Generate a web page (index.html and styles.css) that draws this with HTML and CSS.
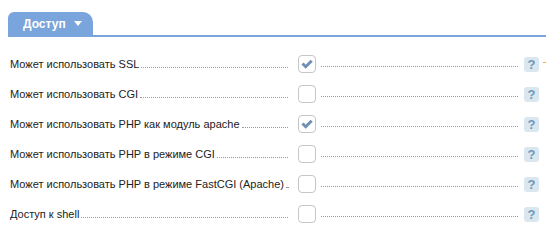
FILE: index.html
```html
<!DOCTYPE html>
<html lang="ru">
<head>
  <meta charset="UTF-8">
  <title>Доступ</title>
  <link rel="stylesheet" href="styles.css">
</head>
<body>

<div class=tabs>
  <span class=tab>Доступ <i class=caret></i></span>
</div>

<div class=form>
  <div class=row>
    <label class=name><span>Может использовать SSL</span></label>
    <span class=box><svg viewBox="0 0 16 16"><path d="M3.5 7.5l3.2 3.2 6-6"/></svg></span>
    <span class=lead></span>
    <span class=help>?</span>
    <i class=mark></i>
  </div>
  <div class=row>
    <label class=name><span>Может использовать CGI</span></label>
    <span class=box></span>
    <span class=lead></span>
    <span class=help>?</span>
  </div>
  <div class=row>
    <label class=name><span>Может использовать PHP как модуль apache</span></label>
    <span class=box><svg viewBox="0 0 16 16"><path d="M3.5 7.5l3.2 3.2 6-6"/></svg></span>
    <span class=lead></span>
    <span class=help>?</span>
  </div>
  <div class=row>
    <label class=name><span>Может использовать PHP в режиме CGI</span></label>
    <span class=box></span>
    <span class=lead></span>
    <span class=help>?</span>
  </div>
  <div class=row>
    <label class=name><span>Может использовать PHP в режиме FastCGI (Apache)</span></label>
    <span class=box></span>
    <span class=lead></span>
    <span class=help>?</span>
  </div>
  <div class=row>
    <label class=name><span>Доступ к shell</span></label>
    <span class=box></span>
    <span class=lead></span>
    <span class=help>?</span>
  </div>
</div>

</body>
</html>
```

FILE: styles.css
```css
body {
  margin: 0;
  font: 11px "Liberation Sans", Arial, sans-serif;
  color: #222;
  background: #fff;
}
.tabs {
  margin: 12px 0 0 8px;
  border-bottom: 2px solid #7aa5dc;
  height: 23px;
}
.tab {
  display: inline-flex;
  align-items: center;
  height: 23px;
  width: 85px;
  box-sizing: border-box;
  padding-left: 15px;
  background: #7aa5dc;
  border-radius: 6px 10px 0 0;
  color: #fff;
  font-weight: bold;
  font-size: 12px;
}
.caret {
  margin-left: 8px;
  border: 4px solid transparent;
  border-top: 5px solid #fff;
  border-bottom: 0;
}
.form { margin-top: 12px; }
.row {
  display: flex;
  align-items: center;
  height: 30px;
  padding-left: 10px;
  position: relative;
}
.name {
  display: flex;
  align-items: baseline;
  width: 278px;
  flex: none;
}
.name span { white-space: nowrap; }
.name::after {
  content: "";
  flex: 1;
  margin-left: 2px;
  border-bottom: 1px dotted #999;
}
.box {
  width: 16px;
  height: 16px;
  margin-left: 10px;
  border: 1px solid #c6c6c6;
  border-radius: 4px;
  flex: none;
}
.box svg {
  display: block;
  width: 16px;
  height: 16px;
  fill: none;
  stroke: #6f8fb3;
  stroke-width: 3;
}
.lead {
  width: 197px;
  margin: 5px 0 0 5px;
  border-bottom: 1px dotted #999;
  flex: none;
}
.help {
  width: 15px;
  height: 15px;
  margin-left: 6px;
  border-radius: 3px;
  background: #dbe7ef;
  color: #6f98c0;
  font-weight: bold;
  font-size: 13px;
  line-height: 15px;
  text-align: center;
  flex: none;
}
.mark {
  position: absolute;
  left: 543px;
  top: 13px;
  width: 3px;
  height: 1px;
  background: #e8b43a;
}
```
